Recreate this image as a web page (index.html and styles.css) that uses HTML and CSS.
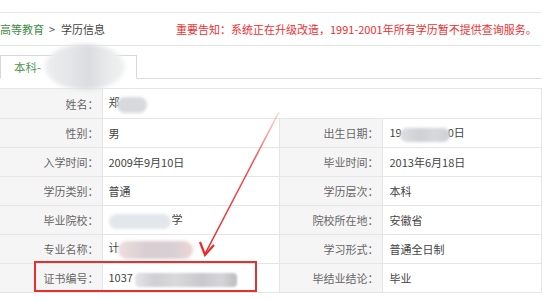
FILE: index.html
```html
<!DOCTYPE html>
<html lang="zh-CN">
<head>
<meta charset="utf-8">
<title>学历信息</title>
<link rel="stylesheet" href="styles.css">
</head>
<body>
<div class="page">
  <div class="topstrip"></div>
  <div class="crumbbar">
    <span class="crumbs"><span class="crumb-link">高等教育</span><span class="sep">&gt;</span>学历信息</span>
    <span class="notice">重要告知：系统正在升级改造，1991-2001年所有学历暂不提供查询服务。</span>
  </div>
  <div class="tabs">
    <div class="tab">本科-<span class="blob blob-tab"></span></div>
  </div>
  <div class="content">
    <table class="info">
      <colgroup>
        <col class="c-l1">
        <col class="c-v1">
        <col class="c-l2">
        <col class="c-v2">
      </colgroup>
      <tr class="first">
        <th>姓名：</th>
        <td colspan="3">郑<span class="blob blob-name"></span></td>
      </tr>
      <tr>
        <th>性别：</th><td>男</td>
        <th>出生日期：</th><td class="v2">19<span class="blob blob-birth"></span>0日</td>
      </tr>
      <tr>
        <th>入学时间：</th><td>2009年9月10日</td>
        <th>毕业时间：</th><td class="v2">2013年6月18日</td>
      </tr>
      <tr>
        <th>学历类别：</th><td>普通</td>
        <th>学历层次：</th><td class="v2">本科</td>
      </tr>
      <tr>
        <th>毕业院校：</th><td><span class="blob blob-school"></span>学</td>
        <th>院校所在地：</th><td class="v2">安徽省</td>
      </tr>
      <tr>
        <th>专业名称：</th><td>计<span class="blob blob-major"></span></td>
        <th>学习形式：</th><td class="v2">普通全日制</td>
      </tr>
      <tr>
        <th>证书编号：</th><td>1037 <span class="blob blob-cert"></span></td>
        <th>毕结业结论：</th><td class="v2">毕业</td>
      </tr>
    </table>
  </div>
  <svg class="annot" width="543" height="300" viewBox="0 0 543 300">
    <defs>
      <linearGradient id="fade" x1="279" y1="112" x2="205" y2="254" gradientUnits="userSpaceOnUse">
        <stop offset="0" stop-color="#f04a4a" stop-opacity="0.2"/>
        <stop offset="0.35" stop-color="#ee3333" stop-opacity="0.85"/>
        <stop offset="1" stop-color="#e62b2b" stop-opacity="1"/>
      </linearGradient>
    </defs>
    <line x1="279" y1="112" x2="205" y2="254" stroke="url(#fade)" stroke-width="1.6"/>
    <polyline points="200,242 205,255 214,245" fill="none" stroke="#e62b2b" stroke-width="2.2" stroke-linejoin="miter"/>
    <rect x="35" y="262" width="221" height="29" fill="none" stroke="#e5302d" stroke-width="2"/>
  </svg>
</div>
</body>
</html>
```
FILE: styles.css
```css
html, body {
  margin: 0;
  padding: 0;
  background: #ffffff;
}
body {
  font-family: "Noto Sans CJK SC", "Noto Sans", sans-serif;
  font-size: 11px;
  color: #444;
}
.page {
  position: relative;
  width: 543px;
  height: 300px;
  overflow: hidden;
}
.topstrip {
  height: 12px;
  width: 541px;
  border-bottom: 1px solid #e2e8ec;
}
.crumbbar {
  display: flex;
  align-items: center;
  height: 32px;
  width: 541px;
  border-bottom: 1px solid #dfe6e2;
  white-space: nowrap;
}
.crumbs {
  color: #444;
  width: 176px;
  flex: none;
}
.crumb-link {
  color: #3f8b45;
}
.sep {
  margin: 0 6px 0 5px;
  color: #555;
}
.notice {
  color: #f0302f;
  font-size: 11px;
}
.tabs {
  margin-top: 9px;
  width: 541px;
  height: 23px;
  border-bottom: 1px solid #dcdcdc;
  display: flex;
}
.tab {
  position: relative;
  box-sizing: border-box;
  width: 137px;
  height: 24px;
  border: 1px solid #d8d8d8;
  border-bottom: 1px solid #ffffff;
  background: #fff;
  color: #4f9a55;
  font-size: 11.5px;
  line-height: 22px;
  padding-left: 13px;
}
.content {
  padding-top: 9px;
  width: 541px;
}
.info {
  border-collapse: collapse;
  width: 541px;
  table-layout: fixed;
}
.c-l1 { width: 102px; }
.c-v1 { width: 177px; }
.c-l2 { width: 103px; }
.c-v2 { width: 159px; }
.info th, .info td {
  border: 1px solid #e5e5e5;
  height: 28px;
  padding: 0;
  font-weight: normal;
  white-space: nowrap;
  overflow: visible;
}
.info tr.first th, .info tr.first td {
  height: 29px;
}
.info th {
  background: #f5f5f5;
  color: #666;
  text-align: right;
  padding-right: 3px;
}
.info td {
  color: #444;
  text-align: left;
  padding-left: 6px;
}
.info td.v2 { padding-left: 7px; }
.info th:first-child { border-left: none; }

.blob {
  display: inline-block;
  vertical-align: middle;
  border-radius: 10px;
  filter: blur(1.6px);
}
.blob-tab {
  position: absolute;
  left: 44px;
  top: -12px;
  width: 80px;
  height: 46px;
  border-radius: 50%;
  background: linear-gradient(90deg, #eceeef 0%, #e4e6e8 30%, #dadcdf 55%, #e9ebec 80%, #f0f1f1 100%);
  filter: blur(2px);
}
.blob-name {
  width: 30px;
  height: 16px;
  background: #d8d9dd;
  margin-left: -3px;
}
.blob-birth {
  width: 50px;
  height: 14px;
  background: linear-gradient(90deg, #dcdde0, #cfd0d4 40%, #d8d9dc 70%, #cdced2);
  margin: 0 -2px 0 -2px;
}
.blob-school {
  width: 62px;
  height: 15px;
  background: #e3e7ec;
  margin-right: 1px;
}
.blob-major {
  width: 75px;
  height: 18px;
  background: linear-gradient(90deg, #eedede, #d9cfd3 35%, #d6cfd3 70%, #ecd6d6);
  margin-left: -2px;
}
.blob-cert {
  width: 102px;
  height: 14px;
  background: linear-gradient(90deg, #e5e5e7, #cfcfd3 20%, #dadadc 40%, #c9c9cd 65%, #d5d5d8 85%, #bcbcc0);
  filter: blur(1.2px);
  border-radius: 4px;
}
.annot {
  position: absolute;
  left: 0;
  top: 0;
  pointer-events: none;
}
```
